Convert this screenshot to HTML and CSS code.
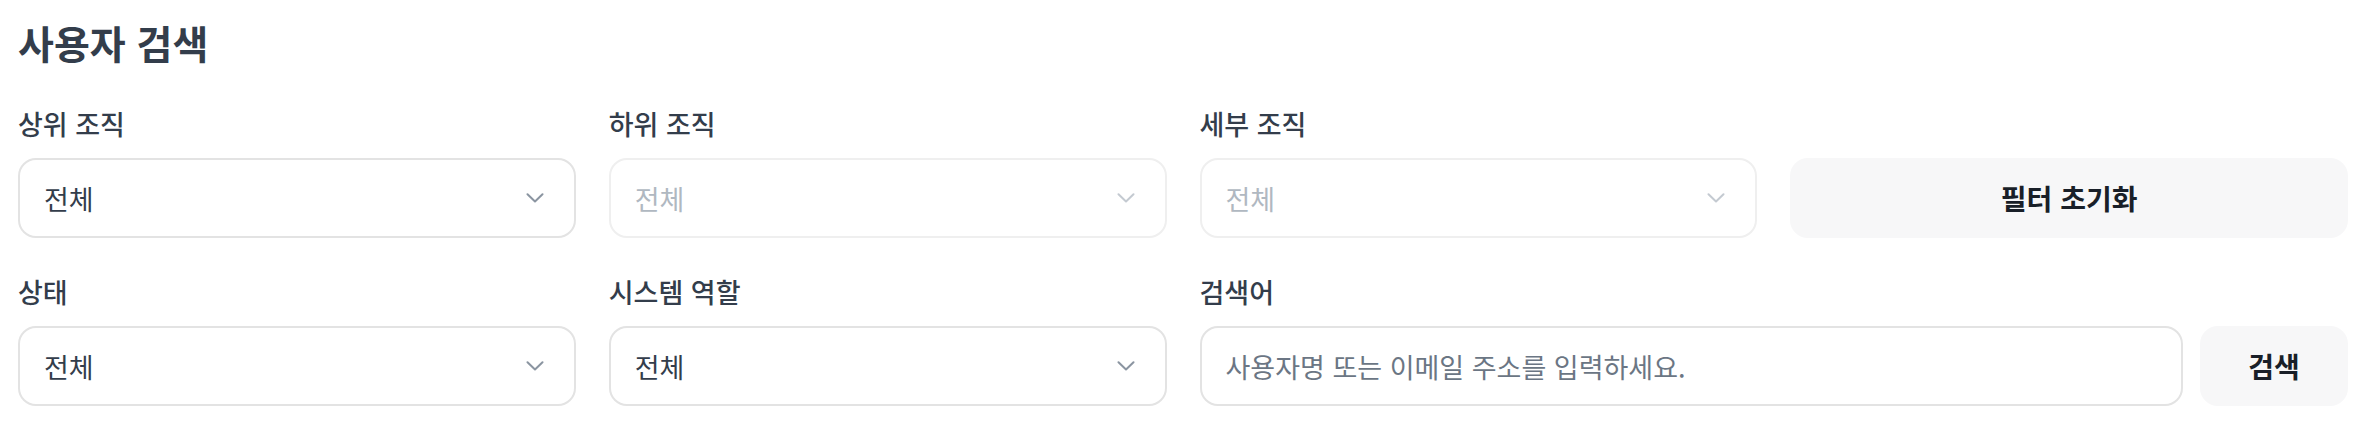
FILE: index.html
```html
<!DOCTYPE html>
<html lang="ko">
<head>
<meta charset="utf-8">
<title>사용자 검색</title>
<link rel="stylesheet" href="styles.css">
</head>
<body>
<div class="page">
  <h1 class="title">사용자 검색</h1>
  <div class="grid">
    <div class="field">
      <div class="label">상위 조직</div>
      <div class="select">
        <span class="value">전체</span>
        <svg class="chev" width="18" height="10" viewBox="0 0 18 10"><polyline points="1.5,1.2 9,8.5 16.5,1.2" fill="none" stroke="currentColor" stroke-width="2" stroke-linecap="round" stroke-linejoin="round"/></svg>
      </div>
    </div>
    <div class="field">
      <div class="label">하위 조직</div>
      <div class="select disabled">
        <span class="value">전체</span>
        <svg class="chev" width="18" height="10" viewBox="0 0 18 10"><polyline points="1.5,1.2 9,8.5 16.5,1.2" fill="none" stroke="currentColor" stroke-width="2" stroke-linecap="round" stroke-linejoin="round"/></svg>
      </div>
    </div>
    <div class="field">
      <div class="label">세부 조직</div>
      <div class="select disabled">
        <span class="value">전체</span>
        <svg class="chev" width="18" height="10" viewBox="0 0 18 10"><polyline points="1.5,1.2 9,8.5 16.5,1.2" fill="none" stroke="currentColor" stroke-width="2" stroke-linecap="round" stroke-linejoin="round"/></svg>
      </div>
    </div>
    <div class="field field-end">
      <button class="btn btn-wide" type="button">필터 초기화</button>
    </div>

    <div class="field">
      <div class="label">상태</div>
      <div class="select">
        <span class="value">전체</span>
        <svg class="chev" width="18" height="10" viewBox="0 0 18 10"><polyline points="1.5,1.2 9,8.5 16.5,1.2" fill="none" stroke="currentColor" stroke-width="2" stroke-linecap="round" stroke-linejoin="round"/></svg>
      </div>
    </div>
    <div class="field">
      <div class="label">시스템 역할</div>
      <div class="select">
        <span class="value">전체</span>
        <svg class="chev" width="18" height="10" viewBox="0 0 18 10"><polyline points="1.5,1.2 9,8.5 16.5,1.2" fill="none" stroke="currentColor" stroke-width="2" stroke-linecap="round" stroke-linejoin="round"/></svg>
      </div>
    </div>
    <div class="field span2">
      <div class="label">검색어</div>
      <div class="search-row">
        <div class="input"><span class="placeholder">사용자명 또는 이메일 주소를 입력하세요.</span></div>
        <button class="btn btn-search" type="button">검색</button>
      </div>
    </div>
  </div>
</div>
</body>
</html>
```

FILE: styles.css
```css
* { box-sizing: border-box; }
html, body { margin: 0; padding: 0; background: #ffffff; }
body {
  font-family: "Noto Sans CJK KR", "Noto Sans", sans-serif;
  color: #333d4b;
}
.page {
  padding: 15px 20px 0 18px;
}
.title {
  margin: 0 0 37px 0;
  font-size: 39px;
  line-height: 54px;
  font-weight: 700;
  color: #333d4b;
  letter-spacing: 0;
}
.grid {
  display: grid;
  grid-template-columns: repeat(4, 1fr);
  column-gap: 33px;
  row-gap: 36px;
}
.field {
  display: flex;
  flex-direction: column;
  gap: 16px;
}
.field-end { justify-content: flex-end; }
.span2 { grid-column: span 2; }
.label {
  font-size: 27px;
  line-height: 36px;
  font-weight: 500;
  color: #333d4b;
}
.select, .input {
  height: 80px;
  border: 2px solid #e3e3e3;
  border-radius: 18px;
  background: #fff;
  display: flex;
  align-items: center;
  padding: 0 30px 0 24px;
  font-size: 27px;
}
.select { justify-content: space-between; }
.select .value { color: #333d4b; }
.chev { color: #8b95a1; display: block; }
.select.disabled { border-color: #efefef; }
.select.disabled .value { color: #b0b8c1; }
.select.disabled .chev { color: #c4cad1; }
.search-row {
  display: flex;
  gap: 17px;
}
.input { flex: 1; }
.placeholder { color: #6b7684; }
.btn {
  height: 80px;
  border: none;
  border-radius: 18px;
  background: #f7f7f8;
  font-family: inherit;
  font-size: 28px;
  font-weight: 700;
  color: #191f28;
  padding: 0;
}
.btn-wide { width: 100%; }
.btn-search { width: 148px; flex: none; }
```
